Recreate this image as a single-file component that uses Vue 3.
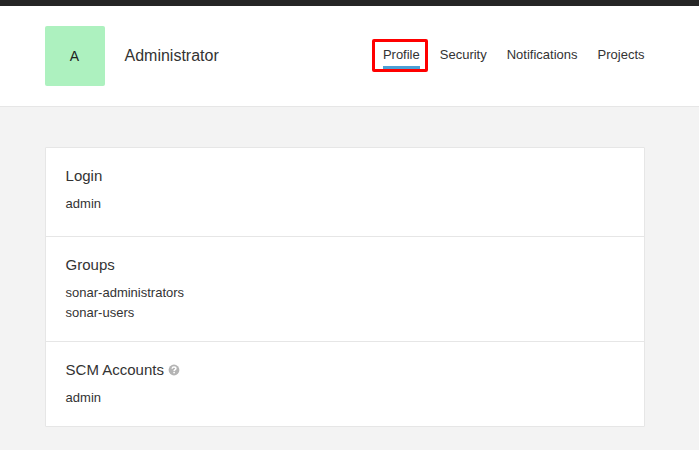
<script setup>
const tabs = ['Profile', 'Security', 'Notifications', 'Projects']
const sections = [
  { title: 'Login', items: ['admin'] },
  { title: 'Groups', items: ['sonar-administrators', 'sonar-users'] },
  { title: 'SCM Accounts', items: ['admin'], help: true },
]
</script>

<template>
  <div class="page">
    <div class="topbar"></div>
    <header class="header">
      <div class="avatar">A</div>
      <h1 class="name">Administrator</h1>
      <nav class="tabs">
        <a v-for="(tab, i) in tabs" :key="tab" class="tab" :class="{ active: i === 0 }">{{ tab }}</a>
      </nav>
    </header>
    <main class="card">
      <section v-for="s in sections" :key="s.title" class="section">
        <h2 class="title">
          <span>{{ s.title }}</span>
          <svg v-if="s.help" class="help" width="12" height="12" viewBox="0 0 12 12">
            <circle cx="6" cy="6" r="5.4" fill="#b4b4b4" />
            <path d="M4.100 4.700C4.200 3.500 5 2.900 6 2.900c1.100 0 1.900.6 1.900 1.600C7.900 5.700 6.100 5.700 6.100 7.100" fill="none" stroke="#fff" stroke-width="1.500" />
            <rect x="5.300" y="7.800" width="1.600" height="1.500" fill="#fff" />
          </svg>
        </h2>
        <ul class="items">
          <li v-for="item in s.items" :key="item">{{ item }}</li>
        </ul>
      </section>
    </main>
  </div>
</template>

<style>
body {
  background: #f3f3f3;
}
</style>

<style scoped>
.page {
  box-sizing: border-box;
  height: 450px;
  overflow: hidden;
  background: #f3f3f3;
  color: #333;
  font-family: "Liberation Sans", Arial, sans-serif;
  font-size: 13px;
  line-height: 20px;
}
.topbar {
  height: 6px;
  background: #262626;
}
.header {
  display: flex;
  align-items: center;
  box-sizing: border-box;
  height: 101px;
  padding: 0 54.5px 0 45px;
  background: #fff;
  border-bottom: 1px solid #e6e6e6;
}
.avatar {
  box-sizing: border-box;
  width: 60px;
  height: 60px;
  padding-right: 1px;
  border-radius: 2px;
  background: #adf1bf;
  color: #222;
  font-size: 14px;
  line-height: 60px;
  text-align: center;
}
.name {
  margin: 0 0 0 19.5px;
  font-size: 16px;
  font-weight: 400;
}
.tabs {
  display: flex;
  gap: 20px;
  margin: 0 0 2px auto;
}
.tab {
  position: relative;
  padding: 4px 0 1px;
  border-bottom: 3px solid transparent;
}
.tab.active {
  border-bottom-color: #4b9fd5;
}
.tab.active::after {
  content: "";
  position: absolute;
  top: -2px;
  right: -8px;
  bottom: -6px;
  left: -11px;
  border: 3px solid #ff0000;
  border-radius: 2px;
}
.card {
  width: 598px;
  margin: 40px 0 0 45px;
  background: #fff;
  border: 1px solid #e6e6e6;
  border-radius: 1px;
}
.section {
  padding: 18px 20px 18px 19.6px;
}
.section:first-child {
  padding-bottom: 22px;
}
.section + .section {
  border-top: 1px solid #e6e6e6;
}
.title {
  display: flex;
  align-items: center;
  gap: 4px;
  margin: 0 0 8px;
  font-size: 15px;
  font-weight: 400;
}
.items {
  margin: 0;
  padding: 0;
  list-style: none;
}
</style>
